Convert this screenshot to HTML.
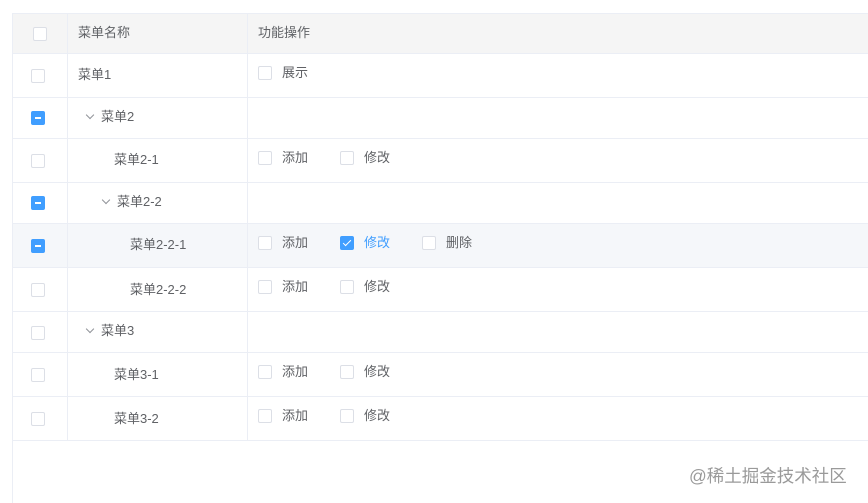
<!DOCTYPE html>
<html><head><meta charset="utf-8"><style>
*{margin:0;padding:0;box-sizing:border-box}
body{width:868px;height:503px;background:#fff;position:relative;overflow:hidden;font-family:"Liberation Sans","Noto Sans CJK SC",sans-serif;font-size:13px;color:#606266}
.a{position:absolute}
.hl{position:absolute;left:12px;right:0;height:1px;background:#ebeef5}
.vl{position:absolute;width:1px;background:#ebeef5}
.cb{position:absolute;width:14px;height:14px;border:1px solid #dcdfe6;border-radius:2px;background:#fff}
.cb.ind{background:#409eff;border-color:#409eff}
.cb.ind:after{content:"";position:absolute;left:3px;top:5px;width:6px;height:2px;background:#fff}
.cb.chk{background:#409eff;border-color:#409eff}
.cb.chk:after{content:"";position:absolute;left:4px;top:1px;width:3px;height:7px;border:solid #fff;border-width:0 1px 1px 0;transform:rotate(45deg)}
.t{position:absolute;line-height:16px;white-space:nowrap}
.arr{position:absolute;width:6px;height:6px;border:solid #909399;border-width:0 1px 1px 0;transform:rotate(45deg)}
</style></head><body>
<div class="a" style="left:12px;top:13px;right:0;height:40px;background:#f5f5f5"></div>
<div class="a" style="left:12px;top:223px;right:0;height:44px;background:#f5f7fa"></div>
<div class="hl" style="top:13px"></div>
<div class="hl" style="top:53px"></div>
<div class="hl" style="top:97px"></div>
<div class="hl" style="top:138px"></div>
<div class="hl" style="top:182px"></div>
<div class="hl" style="top:223px"></div>
<div class="hl" style="top:267px"></div>
<div class="hl" style="top:311px"></div>
<div class="hl" style="top:352px"></div>
<div class="hl" style="top:396px"></div>
<div class="hl" style="top:440px"></div>
<div class="vl" style="left:12px;top:13px;height:490px"></div>
<div class="vl" style="left:67px;top:13px;height:428px"></div>
<div class="vl" style="left:247px;top:13px;height:428px"></div>

<div class="cb" style="left:33px;top:27px"></div>
<div class="t" style="left:78px;top:25px">菜单名称</div>
<div class="t" style="left:258px;top:25px">功能操作</div>

<div class="cb" style="left:31px;top:69px"></div>
<div class="t" style="left:78px;top:67px">菜单1</div>
<div class="cb" style="left:258px;top:66px"></div><div class="t" style="left:282px;top:65px">展示</div>

<div class="cb ind" style="left:31px;top:111px"></div>
<div class="arr" style="left:87px;top:112px"></div>
<div class="t" style="left:101px;top:109px">菜单2</div>

<div class="cb" style="left:31px;top:154px"></div>
<div class="t" style="left:114px;top:152px">菜单2-1</div>
<div class="cb" style="left:258px;top:151px"></div><div class="t" style="left:282px;top:150px">添加</div>
<div class="cb" style="left:340px;top:151px"></div><div class="t" style="left:364px;top:150px">修改</div>

<div class="cb ind" style="left:31px;top:196px"></div>
<div class="arr" style="left:103px;top:197px"></div>
<div class="t" style="left:117px;top:194px">菜单2-2</div>

<div class="cb ind" style="left:31px;top:239px"></div>
<div class="t" style="left:130px;top:237px">菜单2-2-1</div>
<div class="cb" style="left:258px;top:236px"></div><div class="t" style="left:282px;top:235px">添加</div>
<div class="cb chk" style="left:340px;top:236px"></div><div class="t" style="left:364px;top:235px;color:#409eff">修改</div>
<div class="cb" style="left:422px;top:236px"></div><div class="t" style="left:446px;top:235px">删除</div>

<div class="cb" style="left:31px;top:283px"></div>
<div class="t" style="left:130px;top:282px">菜单2-2-2</div>
<div class="cb" style="left:258px;top:280px"></div><div class="t" style="left:282px;top:279px">添加</div>
<div class="cb" style="left:340px;top:280px"></div><div class="t" style="left:364px;top:279px">修改</div>

<div class="cb" style="left:31px;top:326px"></div>
<div class="arr" style="left:87px;top:326px"></div>
<div class="t" style="left:101px;top:323px">菜单3</div>

<div class="cb" style="left:31px;top:368px"></div>
<div class="t" style="left:114px;top:367px">菜单3-1</div>
<div class="cb" style="left:258px;top:365px"></div><div class="t" style="left:282px;top:364px">添加</div>
<div class="cb" style="left:340px;top:365px"></div><div class="t" style="left:364px;top:364px">修改</div>

<div class="cb" style="left:31px;top:412px"></div>
<div class="t" style="left:114px;top:411px">菜单3-2</div>
<div class="cb" style="left:258px;top:409px"></div><div class="t" style="left:282px;top:408px">添加</div>
<div class="cb" style="left:340px;top:409px"></div><div class="t" style="left:364px;top:408px">修改</div>

<div class="t" style="left:689px;top:465px;font-size:17.5px;line-height:22px;color:#9a9a9a">@稀土掘金技术社区</div>
</body></html>
